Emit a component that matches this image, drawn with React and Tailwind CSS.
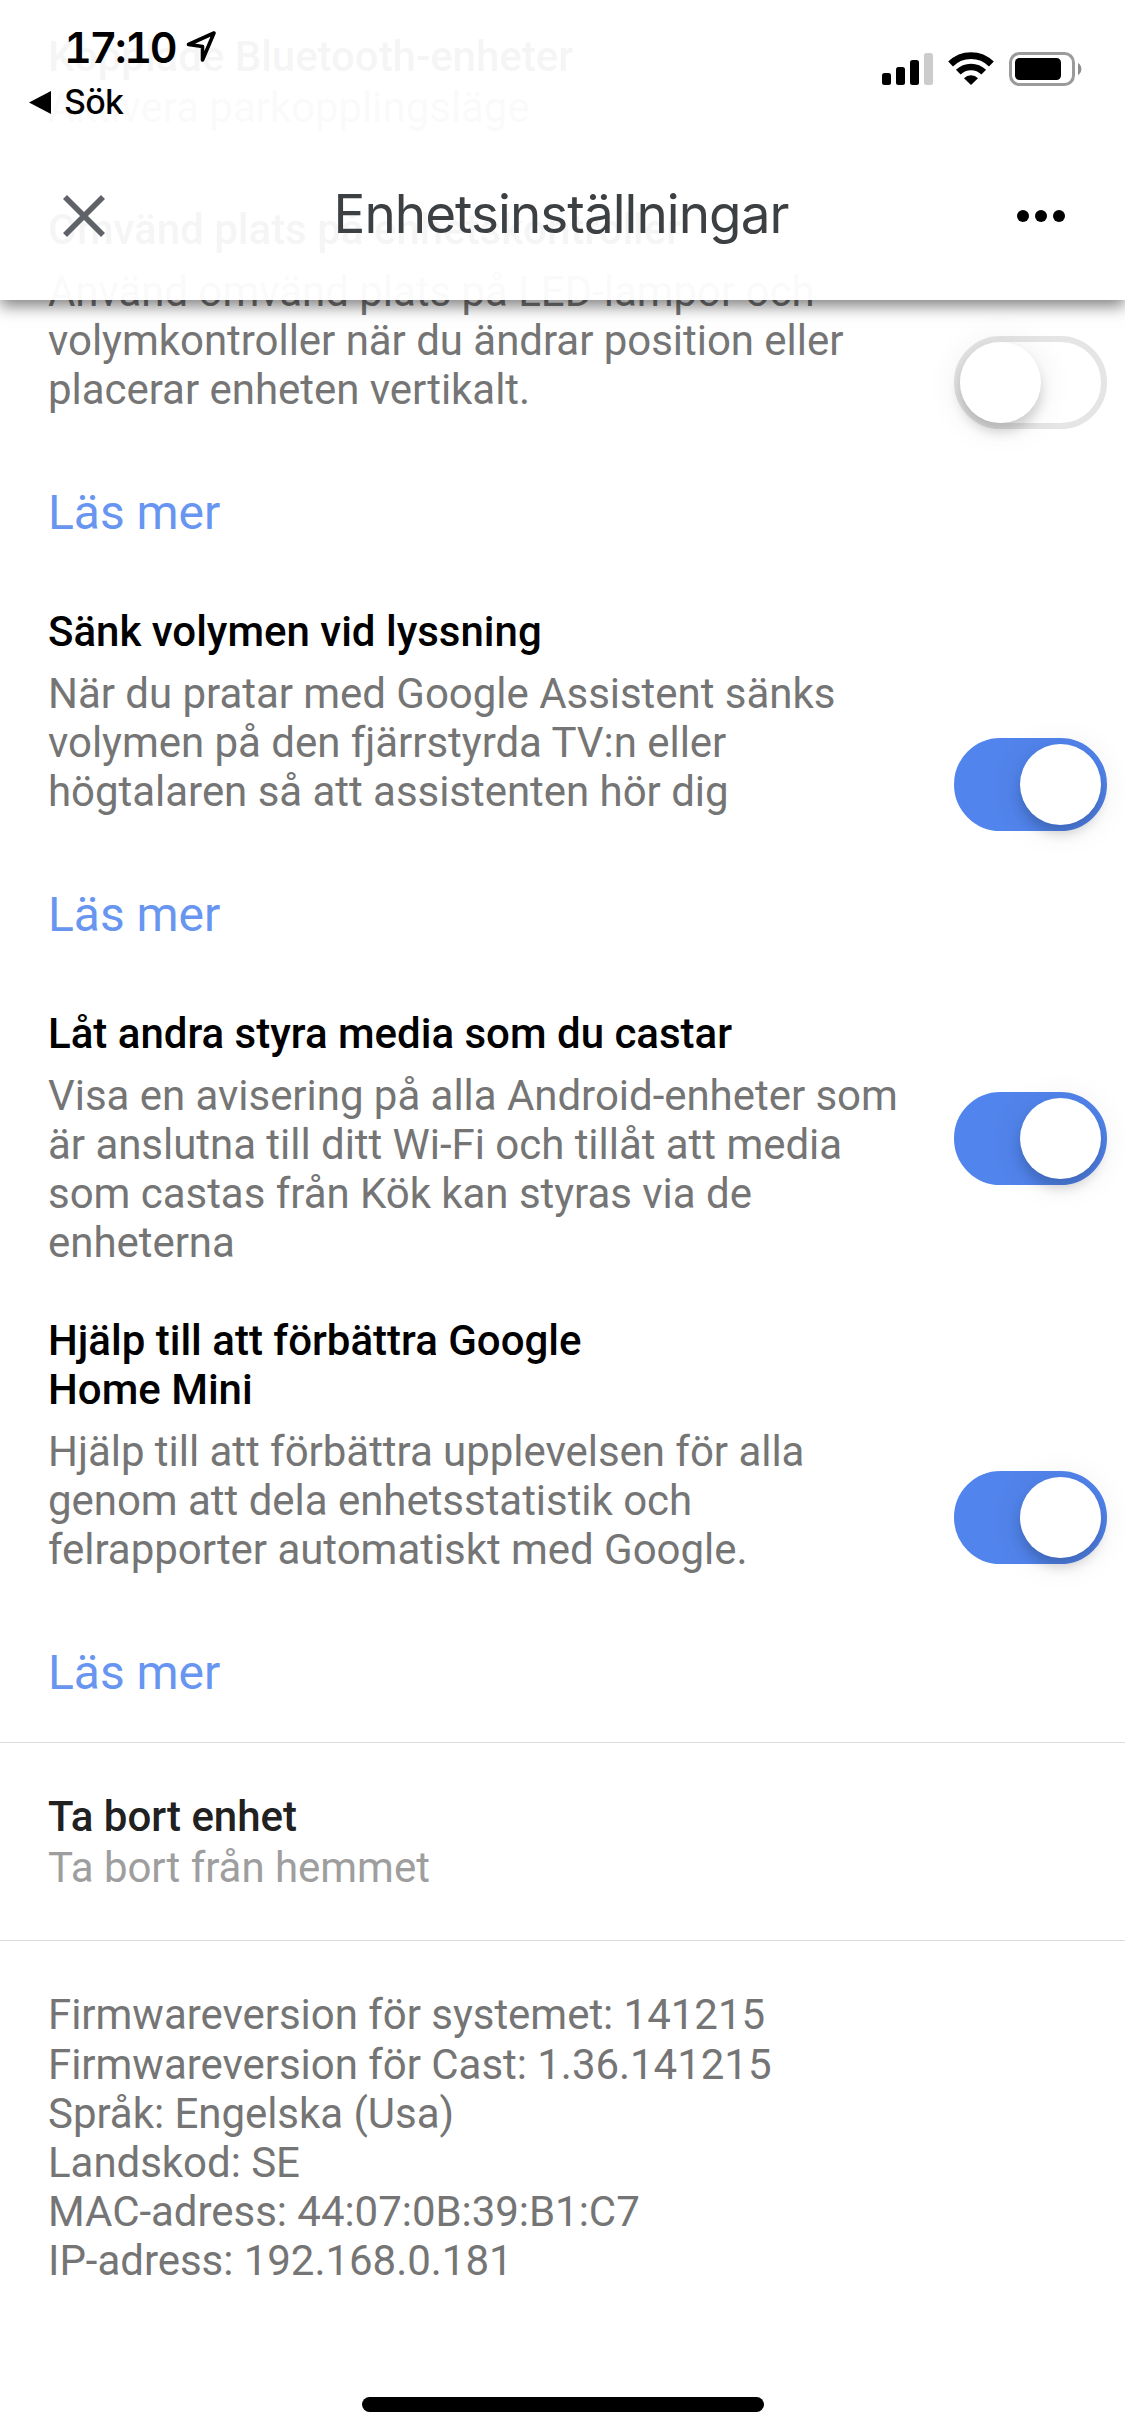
import React from 'react';

function Toggle({ on, className }) {
  return (
    <div
      role="switch"
      aria-checked={on}
      className={`flex h-[93px] w-[153px] shrink-0 items-center rounded-full border-[6px] ${
        on ? 'justify-end border-[#5184ec] bg-[#5184ec]' : 'justify-start border-[#e5e5e5] bg-white'
      } ${className}`}
    >
      <div className="size-[81px] rounded-full bg-white shadow-[0_9px_12px_rgba(0,0,0,0.16),0_3px_36px_rgba(0,0,0,0.09)]" />
    </div>
  );
}

function Setting({ title, lines, more, on, toggleClass }) {
  return (
    <section className="flex justify-between pr-[18px] pl-12">
      <div>
        <h2 className="mb-[13px] font-medium tracking-normal text-black">
          {title.map((l) => (
            <span key={l} className="block">{l}</span>
          ))}
        </h2>
        <p className="text-[#757575]">
          {lines.map((l) => (
            <span key={l} className="block">{l}</span>
          ))}
        </p>
        {more && <a className="mt-[71px] block h-14 text-[48px] leading-[56px] text-[#6795f0]">Läs mer</a>}
      </div>
      <Toggle on={on} className={toggleClass} />
    </section>
  );
}

function StatusBar() {
  return (
    <div className="flex justify-between pr-[42px] pl-[29px]">
      <div className="pt-[20px] font-['Inter',sans-serif] text-black">
        <div className="flex h-[54px] items-center pl-[35px]">
          <span className="w-[112px] text-[43px] leading-[54px] font-semibold tracking-[-2.3px] tabular-nums">17:10</span>
          <svg className="ml-[10px] h-[36px] w-[32px]" viewBox="0 0 32 36" fill="none">
            <path d="M2.5 15.5 28 4 16.5 31V17.5Z" stroke="#000" strokeWidth="3.6" strokeLinejoin="round" />
          </svg>
        </div>
        <div className="mt-1 flex h-[48px] items-center">
          <svg className="h-[23px] w-[22px]" viewBox="0 0 22 23">
            <path d="M0 11.5 22 0V23Z" />
          </svg>
          <span className="ml-[13px] text-[34px] leading-[48px] tracking-[-0.8px] [font-weight:450]">Sök</span>
        </div>
      </div>
      <div className="flex pt-[52px]">
        <svg className="h-[35px] w-[51px]" viewBox="0 0 51 35">
          <rect x="0" y="21" width="9" height="12" rx="2.5" />
          <rect x="14" y="15" width="9" height="18" rx="2.5" />
          <rect x="28" y="8" width="9" height="25" rx="2.5" />
          <rect x="42" y="1" width="9" height="32" rx="2.5" fill="#ccc" />
        </svg>
        <svg className="ml-[15px] h-[33px] w-[46px]" viewBox="0 0 46 33">
          <path d="M2.6 12a28.8 28.8 0 0 1 40.8 0" fill="none" stroke="#000" strokeWidth="6.8" />
          <path d="M10.3 20.2a18 18 0 0 1 25.4 0" fill="none" stroke="#000" strokeWidth="6.6" />
          <path d="M16 26.2a9.8 9.8 0 0 1 14 0L23 33Z" />
        </svg>
        <svg className="ml-[15px] h-[34px] w-[74px]" viewBox="0 0 74 34">
          <rect x="1.5" y="1.5" width="63" height="31" rx="9" fill="none" stroke="#9b9b9b" strokeWidth="3" />
          <rect x="6" y="6" width="46" height="22" rx="4.5" />
          <path d="M69 11a7 7 0 0 1 0 12Z" fill="#8e8e8e" />
        </svg>
      </div>
    </div>
  );
}

function Header() {
  return (
    <header className="absolute inset-x-0 top-0 h-[300px] bg-white/96 shadow-[0_6px_15px_rgba(0,0,0,0.5)]">
      <StatusBar />
      <div className="mt-[48px] flex h-[84px] items-center justify-between pr-[60px] pl-[63px]">
        <svg className="h-[42px] w-[42px]" viewBox="0 0 42 42">
          <path d="M2 2 40 40M40 2 2 40" stroke="#5f6368" strokeWidth="5.6" />
        </svg>
        <h1 className="pb-[4px] font-['Inter',sans-serif] text-[53px] leading-[80px] tracking-[-0.95px] text-[#3c4043]">
          Enhetsinställningar
        </h1>
        <svg className="h-3 w-12" viewBox="0 0 48 12">
          <circle cx="6" cy="6" r="6" />
          <circle cx="24" cy="6" r="6" />
          <circle cx="42" cy="6" r="6" />
        </svg>
      </div>
    </header>
  );
}

const info = [
  'Firmwareversion för systemet: 141215',
  'Firmwareversion för Cast: 1.36.141215',
  'Språk: Engelska (Usa)',
  'Landskod: SE',
  'MAC-adress: 44:07:0B:39:B1:C7',
  'IP-adress: 192.168.0.181',
];

export default function App() {
  return (
    <div className="relative h-[2436px] w-[1125px] overflow-hidden bg-white font-['Roboto',sans-serif] text-[42px] leading-[49px] tracking-[-0.035px]">
      <main className="pt-[32px]">
        <div className="pl-12">
          <div className="font-medium">Kopplade Bluetooth-enheter</div>
          <div className="mt-[2px] text-[#757575]">Aktivera parkopplingsläge</div>
        </div>
        <div className="mt-[73px] flex flex-col gap-[66px]">
          <Setting
            title={['Omvänd plats på enhetskontroller']}
            lines={['Använd omvänd plats på LED-lampor och', 'volymkontroller när du ändrar position eller', 'placerar enheten vertikalt.']}
            more
            on={false}
            toggleClass="mt-[131px]"
          />
          <Setting
            title={['Sänk volymen vid lyssning']}
            lines={['När du pratar med Google Assistent sänks', 'volymen på den fjärrstyrda TV:n eller', 'högtalaren så att assistenten hör dig']}
            more
            on
            toggleClass="mt-[131px]"
          />
          <div className="flex flex-col gap-[49px]">
            <Setting
              title={['Låt andra styra media som du castar']}
              lines={['Visa en avisering på alla Android-enheter som', 'är anslutna till ditt Wi-Fi och tillåt att media', 'som castas från Kök kan styras via de', 'enheterna']}
              on
              toggleClass="mt-[83px]"
            />
            <Setting
              title={['Hjälp till att förbättra Google', 'Home Mini']}
              lines={['Hjälp till att förbättra upplevelsen för alla', 'genom att dela enhetsstatistik och', 'felrapporter automatiskt med Google.']}
              more
              on
              toggleClass="mt-[155px]"
            />
          </div>
        </div>
        <div className="mt-[41px] h-[199px] border-y border-[#dadce0] pt-[49px] pl-12">
          <div className="font-medium text-[#212121]">Ta bort enhet</div>
          <div className="mt-[2px] text-[#9e9e9e]">Ta bort från hemmet</div>
        </div>
        <div className="pt-[49px] pl-12 text-[#757575]">
          {info.map((l) => (
            <div key={l} className="first:mb-px">{l}</div>
          ))}
        </div>
      </main>
      <Header />
      <div className="absolute bottom-[24px] left-[362px] h-[15px] w-[402px] rounded-full bg-black" />
    </div>
  );
}
